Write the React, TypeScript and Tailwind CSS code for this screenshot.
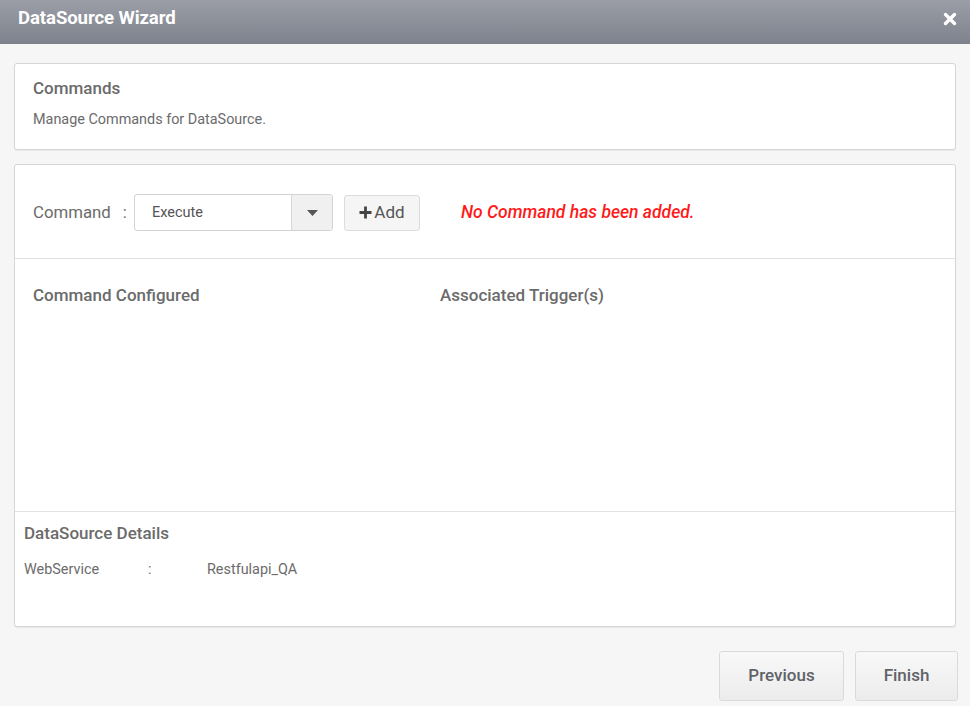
import React from "react";

export default function App() {
  return (
    <div
      className="w-[970px] h-[706px] bg-[#f6f6f6] flex flex-col overflow-hidden"
      style={{ fontFamily: "Roboto, 'Liberation Sans', sans-serif" }}
    >
      <div className="h-[44px] shrink-0 bg-gradient-to-b from-[#9b9ea7] to-[#7e828c] flex items-center justify-between pl-[18px] pr-[13px] pb-[7px]">
        <span className="text-white font-bold text-[18.6px] tracking-[-0.1px]">DataSource Wizard</span>
        <svg width="14" height="14" viewBox="0 0 14 14">
          <path d="M2.5 2.5 L11.5 11.5 M11.5 2.5 L2.5 11.5" stroke="white" strokeWidth="3.4" strokeLinecap="round" />
        </svg>
      </div>

      <div className="flex flex-col px-[14px] pt-[19px]">
        <div className="h-[87px] bg-white border border-[#d6d6d6] rounded-[3px] shadow-[0_1px_1px_rgba(0,0,0,0.06)] pl-[18px] pt-[13px]">
          <div className="text-[17px] font-medium text-[#6b6b6b] leading-[22px]">Commands</div>
          <div className="text-[14.4px] text-[#6b6b6b] mt-[11px] leading-[20px]">Manage Commands for DataSource.</div>
        </div>

        <div className="mt-[14px] h-[463px] bg-white border border-[#d6d6d6] rounded-[3px] shadow-[0_1px_1px_rgba(0,0,0,0.06)] flex flex-col">
          <div className="h-[94px] shrink-0 border-b border-[#e2e2e6] flex items-center pl-[18px] pt-[2px]">
            <span className="text-[16.8px] text-[#6b6b6b] w-[101px] flex items-center">
              Command<span className="ml-[12px]">:</span>
            </span>
            <div className="w-[199px] h-[37px] border border-[#d3d3d3] rounded-[3px] flex items-stretch overflow-hidden">
              <div className="flex-1 flex items-center pl-[17px] text-[14.5px] text-[#555]">Execute</div>
              <div className="w-[41px] bg-[#f0f0f0] border-l border-[#d8d8d8] flex items-center justify-center">
                <svg width="11" height="6" viewBox="0 0 11 6">
                  <path d="M0 0 L11 0 L5.5 6 Z" fill="#555" />
                </svg>
              </div>
            </div>
            <div className="ml-[11px] w-[76px] h-[36px] bg-[#f5f5f5] border border-[#dcdcdc] rounded-[3px] flex items-center justify-center gap-[2px] text-[17px] text-[#555]">
              <svg width="13" height="13" viewBox="0 0 13 13">
                <path d="M6.5 0.5 V12.5 M0.5 6.5 H12.5" stroke="#444" strokeWidth="2.8" />
              </svg>
              <span>Add</span>
            </div>
            <span className="ml-[41px] text-[17.5px] italic font-medium text-[#ff1a1a]">No Command has been added.</span>
          </div>

          <div className="flex-1 border-b border-[#e2e2e6] flex pl-[18px] pt-[26px]">
            <div className="w-[407px] text-[17px] font-medium text-[#6b6b6b] leading-[20px]">Command Configured</div>
            <div className="text-[17px] font-medium text-[#6b6b6b] leading-[20px]">Associated Trigger(s)</div>
          </div>

          <div className="h-[114px] shrink-0 pl-[9px] pt-[10px]">
            <div className="text-[17px] font-medium text-[#6b6b6b] leading-[22px]">DataSource Details</div>
            <div className="flex text-[14.4px] text-[#6b6b6b] mt-[17px] leading-[18px]">
              <span className="w-[124px]">WebService</span>
              <span className="w-[59px]">:</span>
              <span>Restfulapi_QA</span>
            </div>
          </div>
        </div>

        <div className="flex justify-end gap-[11px] mt-[24px] mr-[-2px]">
          <div className="w-[125px] h-[50px] bg-gradient-to-b from-[#f8f8f8] to-[#ececec] border border-[#dadada] rounded-[3px] flex items-center justify-center text-[17px] font-medium text-[#5f6368]">
            Previous
          </div>
          <div className="w-[103px] h-[50px] bg-gradient-to-b from-[#f8f8f8] to-[#ececec] border border-[#dadada] rounded-[3px] flex items-center justify-center text-[17px] font-medium text-[#5f6368]">
            Finish
          </div>
        </div>
      </div>
    </div>
  );
}
